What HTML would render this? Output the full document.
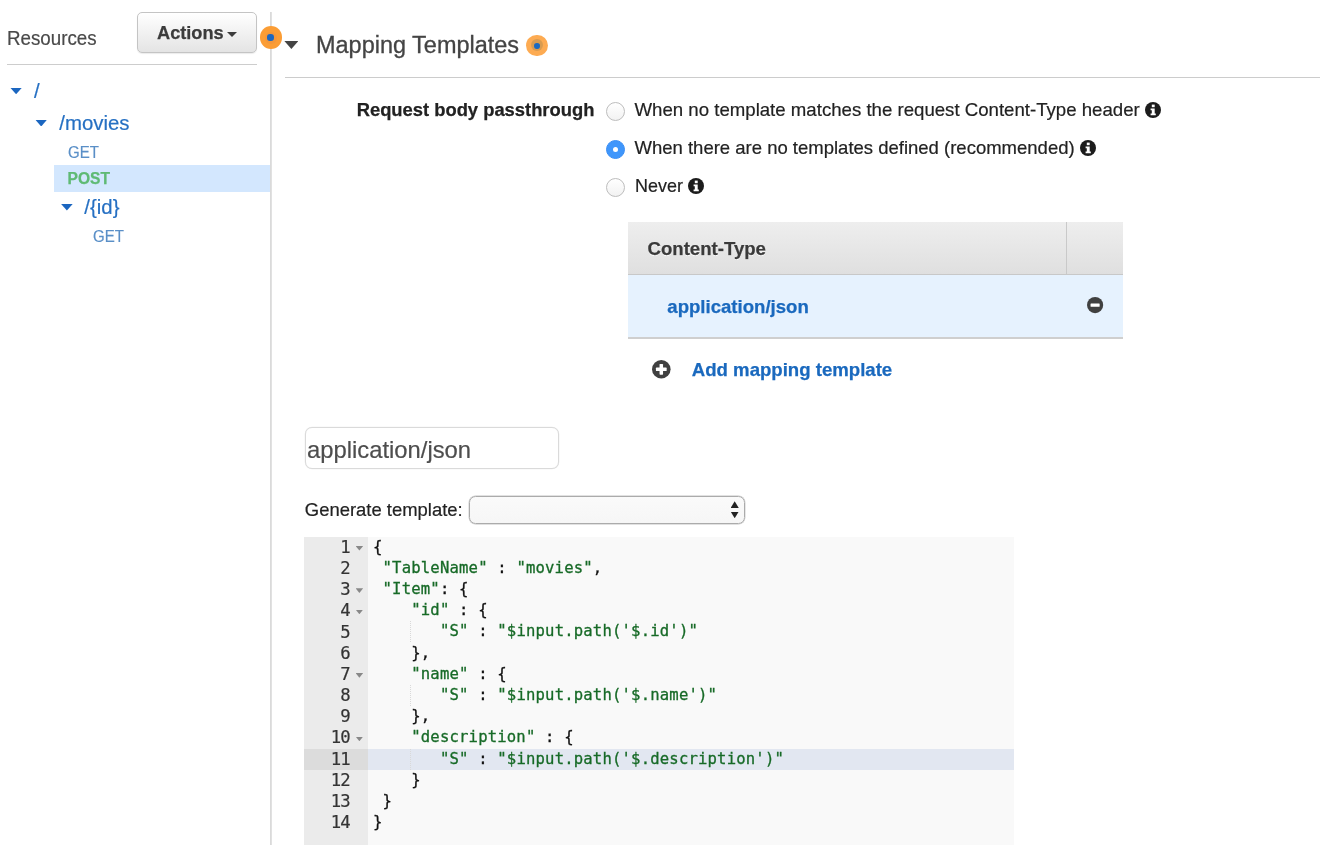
<!DOCTYPE html>
<html lang="en">
<head>
<meta charset="utf-8">
<title>Mapping Templates</title>
<style>
html,body{margin:0;padding:0;background:#fff;}
body{width:1320px;height:845px;position:relative;overflow:hidden;will-change:transform;font-family:"Liberation Sans",Arial,sans-serif;color:#333;}
.t{position:absolute;white-space:pre;transform-origin:0 50%;line-height:1;}
.t{-webkit-text-stroke:.2px;}
.b{font-weight:700;-webkit-text-stroke:.25px;}
.abs{position:absolute;}
.hr{position:absolute;background:#ccc;}
.link{color:#2670c3;}
.b.link{color:#1a69be;}
.get{color:#5a8fc7;}
.tri{position:absolute;}
.dn{clip-path:polygon(0 0,100% 0,50% 100%);}
.up{clip-path:polygon(50% 0,100% 100%,0 100%);}
.dot{position:absolute;border-radius:50%;}
.radio{position:absolute;width:17px;height:17px;border-radius:50%;border:1px solid #bdbdbd;background:linear-gradient(#fff,#f2f2f2);box-sizing:content-box;}
.radio.on{border-color:#3b8ff5;background:#3f96fb;}
.radio.on:after{content:"";position:absolute;left:6px;top:6px;width:5px;height:5px;border-radius:50%;background:#fff;}
svg{position:absolute;overflow:visible;}
/* editor */
#ed{position:absolute;left:304.2px;top:536.5px;width:710.2px;height:308.5px;background:#f9f9f9;font-family:"DejaVu Sans Mono","Liberation Mono",monospace;font-size:15.6px;letter-spacing:.17px;}
#gut{position:absolute;left:0;top:0;width:63.7px;height:308.5px;background:#ebebeb;}
.ln{-webkit-text-stroke:.2px;font-size:17.3px;letter-spacing:-.9px;margin-top:.1px;position:absolute;left:0;width:45.6px;text-align:right;height:21.18px;line-height:21.18px;color:#333;white-space:pre;}
.cl{-webkit-text-stroke:.3px;position:absolute;left:68.8px;height:21.18px;line-height:21.18px;color:#111;white-space:pre;}
.s{color:#176a27;}
.fold{position:absolute;left:51.4px;width:7.6px;height:4.6px;background:#888;clip-path:polygon(0 0,100% 0,50% 100%);}
.ig{position:absolute;width:1px;background:repeating-linear-gradient(#d9d9d9 0 1px,transparent 1px 2px);}
</style>
</head>
<body>

<!-- left panel -->
<span class="t" id="res" style="left:7px;top:28px;font-size:20.3px;color:#4a4a4a;transform:scaleX(.925)">Resources</span>
<div class="abs" id="btn" style="left:137px;top:12px;width:118px;height:39px;border:1px solid #c4c4c4;border-radius:5px;background:linear-gradient(#ffffff,#e4e4e4);box-shadow:0 1px 1px rgba(0,0,0,.08)"></div>
<span class="t b" id="act" style="left:157px;top:24.3px;font-size:18.2px;color:#3c3c3c">Actions</span>
<div class="tri dn" style="left:227px;top:32px;width:10px;height:5px;background:#3c3c3c"></div>
<div class="hr" style="left:7px;top:63.6px;width:250px;height:1.4px;background:#cdcdcd"></div>
<div class="hr" style="left:270px;top:12px;width:2.1px;height:833px;background:linear-gradient(to right,#d7d7d7,#e4e4e4)"></div>

<!-- tree -->
<div class="abs" style="left:54px;top:165.2px;width:216px;height:26.6px;background:#d3e7fe"></div>
<div class="tri dn" style="left:10.3px;top:87.7px;width:11.6px;height:6.6px;background:#1b66c0"></div>
<span class="t link" id="t0" style="left:34px;top:81.3px;font-size:20.4px">/</span>
<div class="tri dn" style="left:35.4px;top:119.8px;width:11.6px;height:6.6px;background:#1b66c0"></div>
<span class="t link" id="t1" style="left:59.3px;top:112.6px;font-size:20.4px">/movies</span>
<span class="t get" id="t2" style="left:67.5px;top:144.8px;font-size:15.8px;transform:scaleX(.95)">GET</span>
<span class="t b" id="t3" style="left:67.5px;top:171px;font-size:15.6px;color:#5fba74">POST</span>
<div class="tri dn" style="left:61.1px;top:204px;width:11.6px;height:6.6px;background:#1b66c0"></div>
<span class="t link" id="t4" style="left:84.3px;top:197.3px;font-size:20.4px">/{id}</span>
<span class="t get" id="t5" style="left:92.5px;top:228.6px;font-size:15.8px;transform:scaleX(.95)">GET</span>

<!-- orange dot on divider -->
<div class="dot" style="left:259.6px;top:26.2px;width:22.3px;height:22.7px;background:#fb9d35"></div>
<div class="dot" style="left:264.9px;top:31.8px;width:11.8px;height:11.8px;background:#f4973a"></div>
<div class="dot" style="left:267.2px;top:34.3px;width:6.9px;height:6.8px;border-radius:45%;background:#1b67c0"></div>

<!-- heading -->
<div class="tri dn" style="left:284.4px;top:41px;width:14px;height:8px;background:#444"></div>
<span class="t" id="head" style="left:316.3px;top:33.6px;font-size:23.1px;color:#444;-webkit-text-stroke:.3px;transform:scaleX(1.016)">Mapping Templates</span>
<div class="dot" style="left:526.3px;top:34.9px;width:21.3px;height:21.2px;background:#fdab52"></div>
<div class="dot" style="left:531px;top:39.3px;width:12px;height:12.2px;background:#d89b50"></div>
<div class="dot" style="left:533.9px;top:42.5px;width:6.2px;height:6.4px;border-radius:45%;background:#1b69c0"></div>
<div class="hr" style="left:284.5px;top:76.5px;width:1036px;height:1.3px"></div>

<!-- passthrough -->
<span class="t b" id="rbp" style="left:356.7px;top:101.3px;font-size:18.38px;color:#222">Request body passthrough</span>
<div class="radio" style="left:606.3px;top:101.8px"></div>
<div class="radio on" style="left:606.3px;top:140px"></div>
<div class="radio" style="left:606.3px;top:178px"></div>
<span class="t" id="r1" style="left:634.5px;top:101px;font-size:18.64px;color:#222">When no template matches the request Content-Type header</span>
<span class="t" id="r2" style="left:634.5px;top:139px;font-size:18.5px;color:#222">When there are no templates defined (recommended)</span>
<span class="t" id="r3" style="left:634.5px;top:177.3px;font-size:18.5px;color:#222;transform:scaleX(.97)">Never</span>

<!-- info icons -->
<svg style="left:1144.8px;top:101.7px" width="16" height="16" viewBox="0 0 16 16"><circle cx="8" cy="8" r="8" fill="#1c1c1c"/><rect x="6.8" y="2.6" width="2.9" height="2.6" fill="#fff"/><path d="M5.6 6.6h4.1v5h1.1v1.7H5.6v-1.7h1.2V8.3H5.6z" fill="#fff"/></svg>
<svg style="left:1079.5px;top:140.2px" width="16" height="16" viewBox="0 0 16 16"><circle cx="8" cy="8" r="8" fill="#1c1c1c"/><rect x="6.8" y="2.6" width="2.9" height="2.6" fill="#fff"/><path d="M5.6 6.6h4.1v5h1.1v1.7H5.6v-1.7h1.2V8.3H5.6z" fill="#fff"/></svg>
<svg style="left:688.2px;top:177.9px" width="16" height="16" viewBox="0 0 16 16"><circle cx="8" cy="8" r="8" fill="#1c1c1c"/><rect x="6.8" y="2.6" width="2.9" height="2.6" fill="#fff"/><path d="M5.6 6.6h4.1v5h1.1v1.7H5.6v-1.7h1.2V8.3H5.6z" fill="#fff"/></svg>

<!-- table -->
<div class="abs" style="left:627.7px;top:222px;width:495px;height:52.5px;background:linear-gradient(#eeeeee,#dfdfdf)"></div>
<div class="hr" style="left:1066.3px;top:222px;width:1px;height:52.5px;background:#c9c9c9"></div>
<div class="abs" style="left:627.7px;top:275.3px;width:495px;height:61.8px;background:#e6f2fe"></div>
<div class="hr" style="left:627.7px;top:274.3px;width:495px;height:1px;background:#c8c8c8"></div>
<div class="hr" style="left:627.7px;top:337px;width:495px;height:1.6px;background:#cfcfcf"></div>
<span class="t b" id="ct" style="left:647.5px;top:239.6px;font-size:18.6px;color:#3a3a3a;text-shadow:0 1px 0 #fff">Content-Type</span>
<span class="t b link" id="aj" style="left:667.3px;top:298px;font-size:18.6px">application/json</span>
<svg style="left:1086.7px;top:297.4px" width="16.2" height="16.2" viewBox="0 0 16 16"><circle cx="8" cy="8" r="8" fill="#404040"/><rect x="3.5" y="6.4" width="9" height="3.2" rx=".5" fill="#fff"/></svg>
<svg style="left:652.4px;top:360px" width="18.6" height="18.6" viewBox="0 0 18 18"><circle cx="9" cy="9" r="9" fill="#404040"/><rect x="3.8" y="7.3" width="10.4" height="3.4" rx=".6" fill="#fff"/><rect x="7.3" y="3.8" width="3.4" height="10.4" rx=".6" fill="#fff"/></svg>
<span class="t b link" id="amt" style="left:691.8px;top:360.7px;font-size:18.6px">Add mapping template</span>

<!-- input -->
<div class="abs" style="left:304.7px;top:427.3px;width:252.2px;height:39.8px;border:1px solid #dadada;box-shadow:0 0 0 .3px #ececec;border-radius:7px;background:#fff"></div>
<span class="t" id="inp" style="left:307px;top:437.6px;font-size:23.8px;color:#4d4d4d">application/json</span>

<!-- generate template -->
<span class="t" id="gen" style="left:304.8px;top:501px;font-size:18.45px;color:#222">Generate template:</span>
<div class="abs" style="left:468.8px;top:496px;width:274.5px;height:25.7px;border:1px solid #ababab;box-shadow:0 0 0 .4px #c4c4c4;border-radius:6.5px;background:linear-gradient(#fafafa,#f6f6f6)"></div>
<div class="tri up" style="left:730.6px;top:501.3px;width:8.2px;height:6.8px;background:#222"></div>
<div class="tri dn" style="left:730.6px;top:511.6px;width:8.2px;height:6.6px;background:#222"></div>

<!-- editor -->
<div id="ed">
  <div id="gut"></div>
  <div class="abs" style="left:0;top:212px;width:63.7px;height:21.2px;background:#dcdcdc"></div>
  <div class="abs" style="left:63.7px;top:212px;width:646.5px;height:21.2px;background:#e2e7f1"></div>
  <div id="lines">
  <div class="ln" style="top:0.20px">1</div>
  <div class="fold" style="top:9.50px"></div>
  <div class="cl" style="top:0.20px">{</div>
  <div class="ln" style="top:21.38px">2</div>
  <div class="cl" style="top:21.38px"> <span class="s">"TableName"</span> : <span class="s">"movies"</span>,</div>
  <div class="ln" style="top:42.56px">3</div>
  <div class="fold" style="top:51.86px"></div>
  <div class="cl" style="top:42.56px"> <span class="s">"Item"</span>: {</div>
  <div class="ln" style="top:63.74px">4</div>
  <div class="fold" style="top:73.04px"></div>
  <div class="cl" style="top:63.74px">    <span class="s">"id"</span> : {</div>
  <div class="ln" style="top:84.92px">5</div>
  <div class="cl" style="top:84.92px">       <span class="s">"S"</span> : <span class="s">"$input.path('$.id')"</span></div>
  <div class="ig" style="left:106.2px;top:84.92px;height:21.18px"></div>
  <div class="ln" style="top:106.10px">6</div>
  <div class="cl" style="top:106.10px">    },</div>
  <div class="ln" style="top:127.28px">7</div>
  <div class="fold" style="top:136.58px"></div>
  <div class="cl" style="top:127.28px">    <span class="s">"name"</span> : {</div>
  <div class="ln" style="top:148.46px">8</div>
  <div class="cl" style="top:148.46px">       <span class="s">"S"</span> : <span class="s">"$input.path('$.name')"</span></div>
  <div class="ig" style="left:106.2px;top:148.46px;height:21.18px"></div>
  <div class="ln" style="top:169.64px">9</div>
  <div class="cl" style="top:169.64px">    },</div>
  <div class="ln" style="top:190.82px">10</div>
  <div class="fold" style="top:200.12px"></div>
  <div class="cl" style="top:190.82px">    <span class="s">"description"</span> : {</div>
  <div class="ln" style="top:212.00px">11</div>
  <div class="cl" style="top:212.00px">       <span class="s">"S"</span> : <span class="s">"$input.path('$.description')"</span></div>
  <div class="ig" style="left:106.2px;top:212.00px;height:21.18px"></div>
  <div class="ln" style="top:233.18px">12</div>
  <div class="cl" style="top:233.18px">    }</div>
  <div class="ln" style="top:254.36px">13</div>
  <div class="cl" style="top:254.36px"> }</div>
  <div class="ln" style="top:275.54px">14</div>
  <div class="cl" style="top:275.54px">}</div>
  </div>
</div>

</body>
</html>
